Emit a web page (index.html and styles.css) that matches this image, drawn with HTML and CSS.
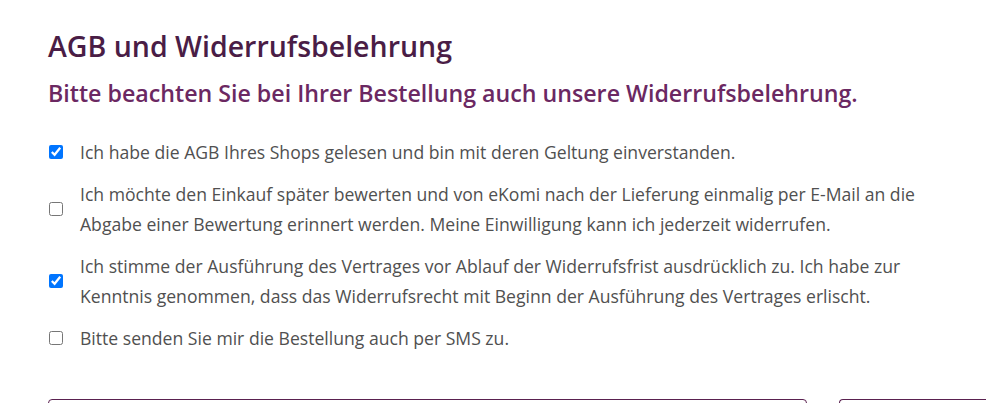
FILE: index.html
```html
<!DOCTYPE html>
<html lang="de">
<head>
<meta charset="utf-8">
<link rel="stylesheet" href="styles.css">
</head>
<body>
<div class="page">
  <h1 class="title">AGB und Widerrufsbelehrung</h1>
  <h2 class="subtitle">Bitte beachten Sie bei Ihrer Bestellung auch unsere Widerrufsbelehrung.</h2>
  <div class="options">
    <label class="option"><input type="checkbox" checked><span class="text">Ich habe die AGB Ihres Shops gelesen und bin mit deren Geltung einverstanden.</span></label>
    <label class="option"><input type="checkbox"><span class="text">Ich möchte den Einkauf später bewerten und von eKomi nach der Lieferung einmalig per E-Mail an die Abgabe einer Bewertung erinnert werden. Meine Einwilligung kann ich jederzeit widerrufen.</span></label>
    <label class="option"><input type="checkbox" checked><span class="text">Ich stimme der Ausführung des Vertrages vor Ablauf der Widerrufsfrist ausdrücklich zu. Ich habe zur Kenntnis genommen, dass das Widerrufsrecht mit Beginn der Ausführung des Vertrages erlischt.</span></label>
    <label class="option"><input type="checkbox"><span class="text">Bitte senden Sie mir die Bestellung auch per SMS zu.</span></label>
  </div>
  <div class="boxes">
    <div class="box"></div>
    <div class="box box-cut"></div>
  </div>
</div>
</body>
</html>
```
FILE: styles.css
```css
html, body {
  margin: 0;
  padding: 0;
  background: #fff;
  overflow: hidden;
}
.page {
  font-family: "Open Sans", "Liberation Sans", sans-serif;
  padding: 26px 0 0 48px;
  width: 938px;
  height: 377px;
  overflow: hidden;
}
.title {
  margin: 0;
  font-size: 28.5px;
  font-weight: 600;
  line-height: 40px;
  color: #4a1d46;
}
.subtitle {
  margin: 12px 0 0 0;
  font-size: 23.2px;
  font-weight: 600;
  line-height: 30px;
  color: #6b2862;
}
.options {
  margin-top: 29px;
  display: flex;
  flex-direction: column;
  gap: 12px;
}
.option {
  display: flex;
  align-items: center;
  width: 890px;
}
.option input {
  margin: 0 17px 0 1px;
  width: 14px;
  height: 14px;
  flex: none;
}
.text {
  font-size: 17.6px;
  line-height: 30px;
  color: #505050;
}
.boxes {
  margin-top: 46px;
  display: grid;
  grid-template-columns: 759px 1fr;
  gap: 32px;
}
.box {
  height: 60px;
  border: 1px solid #5a2150;
  border-radius: 4px;
}
.box-cut {
  border-right: none;
  border-radius: 4px 0 0 4px;
}
```
